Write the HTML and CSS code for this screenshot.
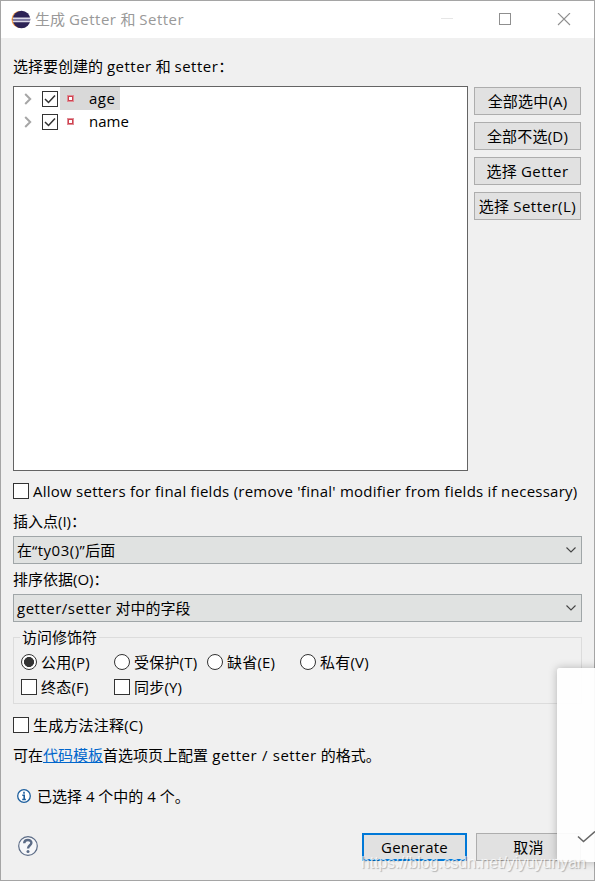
FILE: index.html
```html
<!DOCTYPE html>
<html lang="zh-CN">
<head>
    <meta charset="UTF-8">
    <title>生成 Getter 和 Setter</title>
    <link rel="stylesheet" href="styles.css">
</head>
<body>
    <div class="dialog">
        <div class="titlebar">
            <svg class="logo" viewBox="0 0 20 20">
                <circle cx="9" cy="9.5" r="8.5" fill="#f7a04a"/>
                <circle cx="10.5" cy="9.5" r="8.8" fill="#2c2255"/>
                <path d="M2 8.3h17M2 11.3h17" stroke="#dcdae8" stroke-width="1.7"/>
                <path d="M2 9.8h17" stroke="#8581ab" stroke-width="1.3"/>
            </svg>
            <span class="title">生成 <span class="latin">Getter</span> 和 <span class="latin">Setter</span></span>
            <svg class="window-buttons" viewBox="0 0 130 14">
                <path d="M0 5.5h12" stroke="#e6e6e6"/>
                <rect x="58.5" y=".5" width="11" height="11" fill="none" stroke="#8f8f8f"/>
                <path d="M117 0l12 12M129 0l-12 12" stroke="#8f8f8f" stroke-width="1.1"/>
            </svg>
        </div>

        <div class="content">
            <div class="label heading">选择要创建的 <span class="latin">getter</span> 和 <span class="latin">setter</span>：</div>

            <div class="fields">
                <div class="tree">
                    <div class="tree-row">
                        <svg class="chevron" viewBox="0 0 8 12"><path d="M1.2 1l5 5-5 5" fill="none" stroke="#a6a6a6" stroke-width="2"/></svg>
                        <span class="box"><svg viewBox="0 0 14 14"><path d="M2 7l3.5 3.5L12 3.5" fill="none" stroke="#333" stroke-width="1.5"/></svg></span>
                        <span class="field selected"><i class="private"></i><span class="name latin">age</span></span>
                    </div>
                    <div class="tree-row">
                        <svg class="chevron" viewBox="0 0 8 12"><path d="M1.2 1l5 5-5 5" fill="none" stroke="#a6a6a6" stroke-width="2"/></svg>
                        <span class="box"><svg viewBox="0 0 14 14"><path d="M2 7l3.5 3.5L12 3.5" fill="none" stroke="#333" stroke-width="1.5"/></svg></span>
                        <span class="field"><i class="private"></i><span class="name">name</span></span>
                    </div>
                </div>
                <div class="side-buttons">
                    <div class="button">全部选中(A)</div>
                    <div class="button">全部不选(D)</div>
                    <div class="button"><span>选择 <span class="latin">Getter</span></span></div>
                    <div class="button"><span>选择 <span class="latin">Setter(L)</span></span></div>
                </div>
            </div>

            <div class="option final-option"><span class="box"></span><span class="final-text">Allow setters for final fields (remove 'final' modifier from fields if necessary)</span></div>

            <div class="label">插入点(I)：</div>
            <div class="select">
                <span>在<span class="latin">“ty03()”</span>后面</span>
                <svg class="arrow" viewBox="0 0 10 6"><path d="M.5 .5L5 5 9.5 .5" fill="none" stroke="#444" stroke-width="1.1"/></svg>
            </div>
            <div class="label">排序依据(O)：</div>
            <div class="select">
                <span><span class="latin">getter/setter</span> 对中的字段</span>
                <svg class="arrow" viewBox="0 0 10 6"><path d="M.5 .5L5 5 9.5 .5" fill="none" stroke="#444" stroke-width="1.1"/></svg>
            </div>

            <fieldset class="modifiers">
                <legend>访问修饰符</legend>
                <div class="modifier-grid">
                    <div class="option"><span class="radio checked"></span>公用(P)</div>
                    <div class="option"><span class="radio"></span>受保护(T)</div>
                    <div class="option"><span class="radio"></span>缺省(E)</div>
                    <div class="option"><span class="radio"></span>私有(V)</div>
                    <div class="option"><span class="box"></span>终态(F)</div>
                    <div class="option"><span class="box"></span>同步(Y)</div>
                </div>
            </fieldset>

            <div class="option comment-option"><span class="box"></span>生成方法注释(C)</div>
            <div class="label template">可在<a class="link">代码模板</a>首选项页上配置 <span class="latin">getter / setter</span> 的格式。</div>

            <div class="status">
                <svg class="info" viewBox="0 0 14 14">
                    <circle cx="7" cy="7" r="6.3" fill="#fff" stroke="#1d5f9e" stroke-width="1.3"/>
                    <path d="M7 2.8v1.9M5.3 6.3H7.2V10.4M5.2 10.5h3.7" fill="none" stroke="#1d5f9e" stroke-width="1.6"/>
                </svg>
                <span>已选择 4 个中的 4 个。</span>
            </div>

            <div class="footer">
                <svg class="help" viewBox="0 0 20 20">
                    <circle cx="10" cy="10" r="9.3" fill="#f6f7f9" stroke="#5b6b86" stroke-width="1.2"/>
                    <path d="M6.2 7.2C6.4 3 13.6 3.1 13.4 7C13.3 9.3 10 9.4 10 12.6" fill="none" stroke="#5b6b86" stroke-width="2.4"/>
                    <circle cx="10" cy="15.4" r="1.5" fill="#5b6b86"/>
                </svg>
                <div class="button primary">Generate</div>
                <div class="button cancel">取消</div>
            </div>
        </div>
    </div>

    <div class="overlay">
        <svg viewBox="0 0 18 12"><path d="M1 5.5l5.5 5L18 .5" fill="none" stroke="#666" stroke-width="1.5"/></svg>
    </div>
    <div class="watermark">https://blog.csdn.net/yiyuyunyan</div>
</body>
</html>
```
FILE: styles.css
```css
* {
    box-sizing: border-box;
}
body {
    margin: 0;
    width: 595px;
    height: 881px;
    overflow: hidden;
    position: relative;
    font-family: "Open Sans", "Noto Sans CJK SC", sans-serif;
    font-size: 15px;
    line-height: 20px;
    color: #000;
    white-space: nowrap;
}
.dialog {
    height: 881px;
    border: 1px solid #a5a5a5;
    background: #f0f0f0;
}
.titlebar {
    height: 37px;
    padding: 0 23px 0 10px;
    display: flex;
    align-items: center;
    background: #fff;
    color: #999;
}
.title {
    padding-bottom: 2px;
}
.latin {
    letter-spacing: 0.5px;
}
.logo {
    width: 20px;
    height: 20px;
    margin-right: 4px;
}
.window-buttons {
    width: 130px;
    height: 14px;
    margin-left: auto;
}
.content {
    padding: 18px 12px 0;
}
.label {
    height: 20px;
}
.heading {
    margin-bottom: 10px;
}
.fields {
    display: flex;
    gap: 6px;
}
.tree {
    width: 455px;
    height: 385px;
    border: 1px solid #646464;
    background: #fff;
}
.tree-row {
    display: flex;
    align-items: center;
    height: 23px;
    padding-left: 10px;
}
.chevron {
    width: 8px;
    height: 12px;
    margin-right: 10px;
}
.box {
    width: 16px;
    height: 16px;
    flex: none;
    border: 1px solid #333;
    background: #fff;
}
.box svg {
    display: block;
    width: 14px;
    height: 14px;
}
.field {
    display: flex;
    align-items: center;
    height: 23px;
    margin-left: 2px;
    padding: 0 4px 0 8px;
}
.field.selected {
    width: 60px;
    background: #d9d9d9;
}
.name {
    padding-bottom: 2px;
}
.private {
    width: 5px;
    height: 5px;
    margin-right: 16px;
    border: 1px solid #cf4250;
    background: #fff;
    outline: 0.5px solid #e08c95;
}
.side-buttons {
    display: flex;
    flex-direction: column;
    gap: 7px;
    padding-top: 1px;
}
.button {
    width: 107px;
    height: 28px;
    display: flex;
    align-items: center;
    justify-content: center;
    border: 1px solid #adadad;
    background: #e1e1e1;
    letter-spacing: 0.2px;
}
.option {
    display: flex;
    align-items: center;
    gap: 4px;
    height: 20px;
    letter-spacing: 0.2px;
}
.final-option {
    margin: 10px 0;
}
.final-text {
    letter-spacing: 0.25px;
}
.select {
    height: 28px;
    margin: 5px 0;
    padding: 0 5px 0 3px;
    display: flex;
    align-items: center;
    justify-content: space-between;
    border: 1px solid #a0a6a8;
    background: #e0e2e1;
}
.arrow {
    width: 10px;
    height: 6px;
}
.modifiers {
    height: 77px;
    margin: 5px 0 0;
    padding: 0 7px;
    border: 1px solid #dcdcdc;
}
.modifiers legend {
    margin-left: -1px;
    padding: 0 2px;
    height: 20px;
}
.modifier-grid {
    display: grid;
    grid-template-columns: repeat(4, 93px);
    row-gap: 5px;
    padding-top: 5px;
}
.radio {
    width: 16px;
    height: 16px;
    flex: none;
    border: 1px solid #333;
    border-radius: 50%;
    background: #fff;
}
.radio.checked {
    background: radial-gradient(circle, #333 4.7px, #fff 5.3px);
}
.comment-option {
    margin-top: 11px;
}
.template {
    margin-top: 10px;
    word-spacing: 0.4px;
}
.link {
    color: #0066cc;
    text-decoration: underline;
}
.status {
    display: flex;
    align-items: center;
    gap: 6px;
    height: 20px;
    margin-top: 21px;
    padding-left: 4px;
}
.info {
    width: 14px;
    height: 14px;
}
.footer {
    display: flex;
    align-items: center;
    height: 28px;
    margin-top: 27px;
    padding: 0 1px 0 5px;
}
.help {
    width: 20px;
    height: 20px;
    margin: 0 auto 2px 0;
}
.footer .button {
    width: 105px;
}
.footer .primary {
    border: 2px solid #0078d7;
}
.cancel {
    margin-left: 9px;
}
.overlay {
    position: absolute;
    left: 557px;
    top: 668px;
    width: 44px;
    height: 194px;
    padding: 163px 0 0 20px;
    border-radius: 3px;
    background: rgba(255, 255, 255, 0.93);
    box-shadow: 0 0 8px rgba(0, 0, 0, 0.25);
}
.overlay svg {
    display: block;
    width: 18px;
    height: 12px;
}
.watermark {
    position: absolute;
    left: 361px;
    top: 853px;
    font-family: "Liberation Sans", sans-serif;
    font-size: 15.8px;
    color: rgba(255, 255, 255, 0.75);
    text-shadow: 1px 1px 1px rgba(0, 0, 0, 0.25);
}
```
